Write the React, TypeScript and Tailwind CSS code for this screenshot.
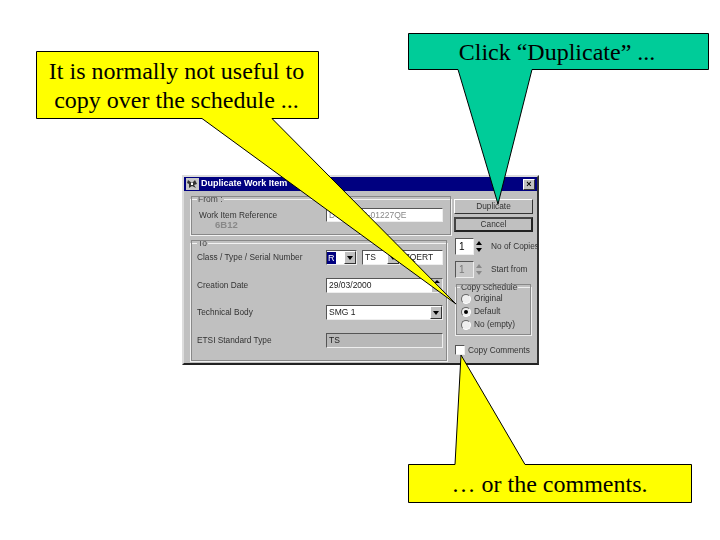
import React from "react";

const ui = "font-['Liberation_Sans',Arial,sans-serif]";
const sunken = "border border-t-[#555] border-l-[#555] border-r-[#eee] border-b-[#eee]";
const raised = "border border-t-white border-l-white border-r-[#333] border-b-[#333]";

function Field({ text, width, grey, arrow, spin }: { text: string; width: string; grey?: boolean; arrow?: boolean; spin?: boolean }) {
    return (
        <div className={`${width} h-[15px] ${sunken} ${grey ? "bg-[#b8b8b8]" : "bg-white"} flex items-center pl-[2px] text-[8.5px] leading-none text-[#222] overflow-hidden shrink-0`}>
            <span className="flex-1 whitespace-nowrap">{text}</span>
            {arrow && <DropArrow />}
            {spin && (
                <div className="w-[10px] h-[13px] bg-[#c0c0c0] flex flex-col items-center justify-around shrink-0">
                    <div className="w-0 h-0 border-x-[3px] border-x-transparent border-b-[3px] border-b-black" />
                    <div className="w-0 h-0 border-x-[3px] border-x-transparent border-t-[3px] border-t-black" />
                </div>
            )}
        </div>
    );
}

function DropArrow() {
    return (
        <div className={`w-[12px] h-[13px] bg-[#c0c0c0] ${raised} flex items-center justify-center shrink-0`}>
            <div className="w-0 h-0 border-x-[3px] border-x-transparent border-t-[4px] border-t-black" />
        </div>
    );
}

function Radio({ label, checked }: { label: string; checked?: boolean }) {
    return (
        <div className="flex items-center gap-[3px] h-[13px] text-[8.3px] text-[#333] whitespace-nowrap">
            <div className="w-[10px] h-[10px] rounded-full bg-[#eee] border border-[#666] border-r-white border-b-white flex items-center justify-center">
                {checked && <div className="w-[4px] h-[4px] rounded-full bg-black" />}
            </div>
            {label}
        </div>
    );
}

function Spinner({ disabled }: { disabled?: boolean }) {
    return (
        <div className="flex">
            <div className={`w-[19px] h-[17px] ${sunken} ${disabled ? "bg-[#c8c8c8] text-[#777]" : "bg-white text-black"} pl-[3px] text-[10px] leading-[15px]`}>1</div>
            <div className="w-[10px] h-[17px] bg-[#c0c0c0] flex flex-col items-center justify-around py-[2px]">
                <div className={`w-0 h-0 border-x-[3px] border-x-transparent border-b-[4px] ${disabled ? "border-b-[#888]" : "border-b-black"}`} />
                <div className={`w-0 h-0 border-x-[3px] border-x-transparent border-t-[4px] ${disabled ? "border-t-[#888]" : "border-t-black"}`} />
            </div>
        </div>
    );
}

function Row({ label, children }: { label: string; children: React.ReactNode }) {
    return (
        <div className="flex items-center h-[15px] text-[8.3px] text-[#333]">
            <span className="w-[129px] shrink-0 whitespace-nowrap">{label}</span>
            {children}
        </div>
    );
}

function Dialog() {
    return (
        <div className={`absolute left-[182px] top-[175px] w-[357px] h-[190px] bg-[#c0c0c0] border-2 border-t-[#ddd] border-l-[#ddd] border-r-[#333] border-b-[#222] blur-[0.35px] ${ui} flex flex-col`}>
            <div className="h-[14px] bg-[#000080] flex items-center px-[2px] text-white text-[9px] font-bold shrink-0">
                <svg width="13" height="12" viewBox="0 0 13 12" className="mr-[2px] shrink-0">
                    <rect width="13" height="12" fill="#c8c8c8" />
                    <path d="M2 2l4 3 3-3 2 4-3 1 2 3-4-2-3 2 0-4-2-1z" fill="#333" />
                    <path d="M5 5l2 0 0 2-2 0z" fill="#fff" />
                </svg>
                <span className="flex-1">Duplicate Work Item</span>
                <div className={`w-[12px] h-[11px] bg-[#c0c0c0] ${raised} flex items-center justify-center text-black text-[9px] leading-none`}>×</div>
            </div>
            <div className="flex flex-1 gap-[6px] pl-[6px] pr-[3px] pt-[4px] pb-[1px]">
                <div className="w-[258px] flex flex-col gap-[3px] shrink-0">
                    <fieldset className="h-[41px] border border-[#f2f2f2] outline outline-1 outline-[#888] -outline-offset-2 px-[8px]">
                        <legend className="text-[8.5px] text-[#444] px-[1px] ml-[-2px] leading-[9px]">From :</legend>
                        <div className="flex items-center h-[20px] mt-[1px] text-[8.3px] leading-[9px] text-[#333]">
                            <div className="w-[127px] shrink-0 relative whitespace-nowrap">
                                Work Item Reference
                                <span className="absolute left-[16px] top-[9px] text-[9.5px] leading-none font-bold text-[#888]">6B12</span>
                            </div>
                            <div className={`w-[117px] h-[14px] ${sunken} bg-white pl-[2px] text-[8.5px] leading-[12px] text-[#888] overflow-hidden whitespace-nowrap`}>DTS/SMG-01227QE</div>
                        </div>
                    </fieldset>
                    <fieldset className="flex-1 border border-[#f2f2f2] outline outline-1 outline-[#888] -outline-offset-2 pl-[6px]">
                        <legend className="text-[8.5px] text-[#444] px-[1px] leading-[9px]">To</legend>
                        <div className="flex flex-col gap-[12.5px] mt-[2px]">
                            <Row label="Class / Type / Serial Number">
                                <div className={`w-[31px] h-[15px] ${sunken} bg-white flex items-center text-[9px] shrink-0`}>
                                    <span className="flex-1 bg-[#000080] text-white pl-[1px] mr-[8px] leading-[12px]">R</span>
                                    <DropArrow />
                                </div>
                                <div className="w-[5px]" />
                                <Field text="TS" width="w-[38px]" arrow />
                                <div className="w-[2px]" />
                                <Field text="7QERT" width="w-[41px]" />
                            </Row>
                            <Row label="Creation Date">
                                <Field text="29/03/2000" width="w-[117px]" spin />
                            </Row>
                            <Row label="Technical Body">
                                <Field text="SMG 1" width="w-[117px]" arrow />
                            </Row>
                            <Row label="ETSI Standard Type">
                                <Field text="TS" width="w-[117px]" grey />
                            </Row>
                        </div>
                    </fieldset>
                </div>
                <div className="flex-1 flex flex-col text-[8.3px] text-[#333]">
                    <div className={`w-[79px] h-[15px] ${raised} flex items-center justify-center mt-[4px] shrink-0`}>Duplicate</div>
                    <div className="w-[79px] h-[15px] border-2 border-[#222] border-t-[#444] border-l-[#444] flex items-center justify-center mt-[3px] shrink-0">Cancel</div>
                    <div className="flex items-center gap-[7px] mt-[6px] ml-[1px] whitespace-nowrap"><Spinner /> <span>No of Copies</span></div>
                    <div className="flex items-center gap-[7px] mt-[6px] ml-[1px] whitespace-nowrap"><Spinner disabled /> <span>Start from</span></div>
                    <fieldset className="w-[77px] h-[53px] mt-[5px] ml-[1px] border border-[#eee] outline outline-1 outline-[#888] -outline-offset-2 pl-[5px] shrink-0">
                        <legend className="px-[1px] text-[8.3px] leading-[9px] ml-[-1px] whitespace-nowrap">Copy Schedule</legend>
                        <div>
                            <Radio label="Original" />
                            <Radio label="Default" checked />
                            <Radio label="No (empty)" />
                        </div>
                    </fieldset>
                    <div className="flex items-center gap-[3px] mt-[8px] ml-[1px] whitespace-nowrap">
                        <div className={`w-[10px] h-[10px] ${sunken} bg-white`} />
                        Copy Comments
                    </div>
                </div>
            </div>
        </div>
    );
}

export default function App() {
    const serif = "font-['Liberation_Serif','Times_New_Roman',serif] text-black text-[24px] leading-[29px] text-center whitespace-nowrap";
    return (
        <div className="relative w-[720px] h-[540px] bg-white overflow-hidden">
            <Dialog />
            {/* callouts: boxes with tails drawn over the dialog */}
            <svg width="720" height="540" className="absolute left-0 top-0">
                <polygon points="36.5,51.5 318.5,51.5 318.5,118.5 272,118.5 456,304 202,118.5 36.5,118.5" fill="#ffff00" stroke="#000" strokeWidth="1" />
                <polygon points="408.5,33.5 708.5,33.5 708.5,69.5 532,69.5 498,204 458,69.5 408.5,69.5" fill="#00cc99" stroke="#000" strokeWidth="1" />
                <polygon points="455,464.5 461,355 525,464.5 691.5,464.5 691.5,502.5 408.5,502.5 408.5,464.5" fill="#ffff00" stroke="#000" strokeWidth="1" />
            </svg>
            <div className={`absolute left-[36px] top-[57px] w-[281px] ${serif}`}>
                It is normally not useful to<br />copy over the schedule ...
            </div>
            <div className={`absolute left-[408px] top-[38px] w-[298px] ${serif}`}>Click “Duplicate” ...</div>
            <div className={`absolute left-[408px] top-[470px] w-[283px] ${serif}`}>… or the comments.</div>
        </div>
    );
}
